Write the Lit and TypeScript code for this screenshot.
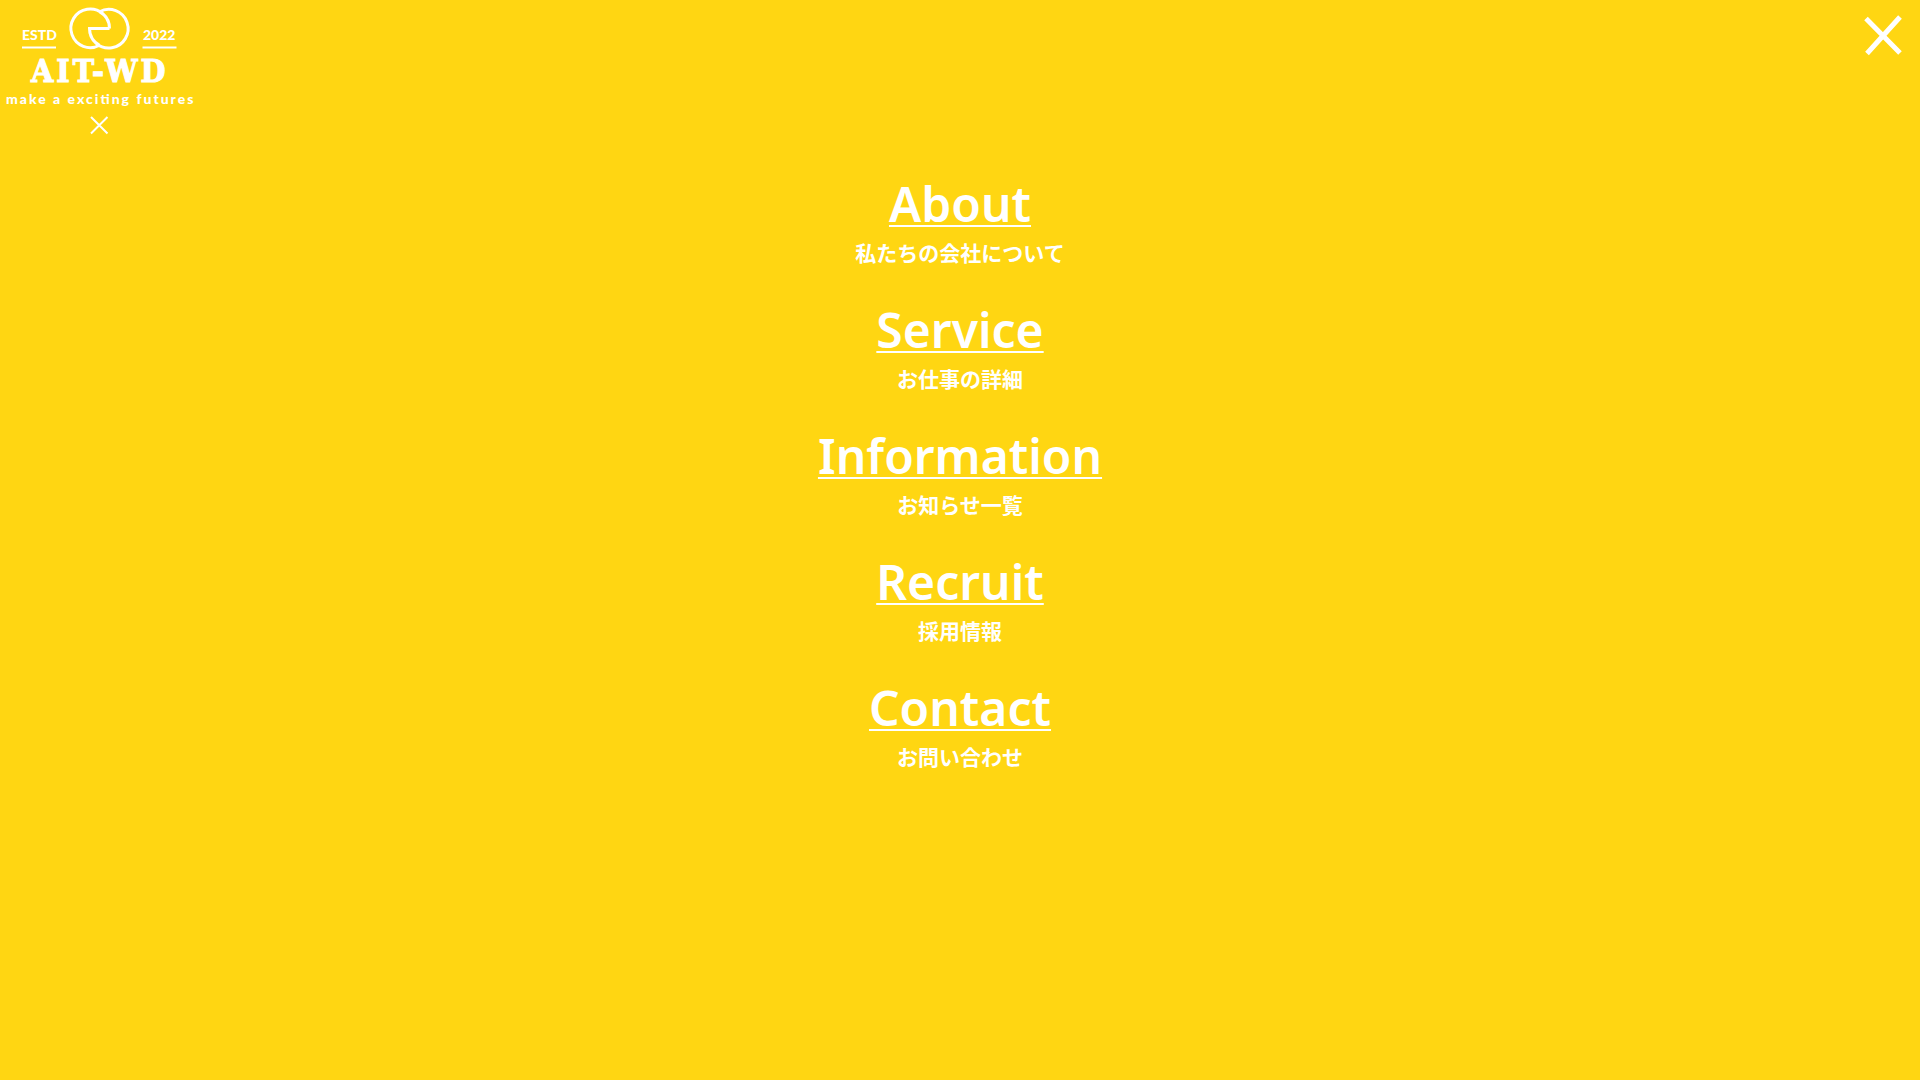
import { LitElement, html, css } from "lit";
import { customElement } from "lit/decorators.js";

interface MenuEntry {
  title: string;
  caption: string;
  href: string;
}

const ENTRIES: MenuEntry[] = [
  { title: "About", caption: "私たちの会社について", href: "#about" },
  { title: "Service", caption: "お仕事の詳細", href: "#service" },
  { title: "Information", caption: "お知らせ一覧", href: "#information" },
  { title: "Recruit", caption: "採用情報", href: "#recruit" },
  { title: "Contact", caption: "お問い合わせ", href: "#contact" },
];

@customElement("site-logo")
export class SiteLogo extends LitElement {
  static styles = css`
    :host {
      display: block;
    }
    .logo {
      display: block;
      fill: none;
      stroke: #fff;
    }
    .word {
      fill: #fff;
      stroke: none;
      font-family: Lato, sans-serif;
      font-weight: 900;
    }
    .small {
      font-size: 14px;
    }
    .name {
      stroke: #fff;
      stroke-width: 1;
      font-family: "DejaVu Serif Condensed", "DejaVu Serif", serif;
      font-size: 32px;
      font-weight: 700;
      letter-spacing: 3px;
    }
    .tagline {
      font-size: 14px;
      letter-spacing: 2px;
      font-feature-settings: "liga" 1;
    }
  `;

  render() {
    return html`
      <svg class="logo" width="200" height="140" viewBox="0 0 200 140" role="img" aria-label="AIT-WD">
        <path
          stroke-width="3"
          d="M109.500 28.500A19.300 19.300 0 1 0 99.500 45.200M109.500 28.500H89.500A19.300 19.300 0 1 0 99.500 11.800M89.500 28.500A19.300 19.300 0 0 0 99.500 45.200M109.500 28.500A19.300 19.300 0 0 0 99.500 11.800"
        />
        <path stroke-width="2" d="M22 47.500H56M142.500 47.500H176.500" />
        <text class="word small" x="22" y="40">ESTD</text>
        <text class="word small" x="143" y="40">2022</text>
        <text class="word name" x="31" y="82">AIT-WD</text>
        <text class="word tagline" x="6" y="104">make a exciting futures</text>
        <path stroke-width="2" d="M91 117L107.500 133.500M107.500 117L91 133.500" />
      </svg>
    `;
  }
}

@customElement("app-root")
export class AppRoot extends LitElement {
  static styles = css`
    :host {
      display: block;
      min-height: 100vh;
      background: #ffd612;
      color: #fff;
      font-family: "Noto Sans", "Noto Sans CJK JP", sans-serif;
    }
    .header {
      display: flex;
      justify-content: space-between;
      align-items: flex-start;
    }
    .close {
      display: block;
      margin: 12px 13px 0 0;
      padding: 0;
      border: 0;
      background: none;
      cursor: pointer;
    }
    .close-icon {
      display: block;
      fill: none;
      stroke: #fff;
      stroke-width: 5;
    }
    .menu {
      display: flex;
      flex-direction: column;
      align-items: center;
      gap: 30px;
      margin: 0;
      padding: 32px 0;
      list-style: none;
    }
    .entry {
      display: flex;
      flex-direction: column;
      align-items: center;
    }
    .link {
      color: inherit;
      font-size: 48px;
      font-weight: 600;
      line-height: 64px;
      text-decoration: underline;
      text-decoration-thickness: 2px;
      text-underline-offset: 3px;
    }
    .caption {
      margin: 0;
      font-family: "Noto Sans CJK JP", sans-serif;
      font-size: 21px;
      font-weight: 700;
      line-height: 32px;
    }
  `;

  render() {
    return html`
      <header class="header">
        <site-logo></site-logo>
        <button class="close" type="button" aria-label="Close menu">
          <svg class="close-icon" width="48" height="48" viewBox="0 0 48 48">
            <path d="M7 6.500L41 41M41 5L8 41.500" />
          </svg>
        </button>
      </header>
      <nav>
        <ul class="menu">
          ${ENTRIES.map(
            (entry) => html`
              <li class="entry">
                <a class="link" href=${entry.href}>${entry.title}</a>
                <p class="caption">${entry.caption}</p>
              </li>
            `,
          )}
        </ul>
      </nav>
    `;
  }
}
